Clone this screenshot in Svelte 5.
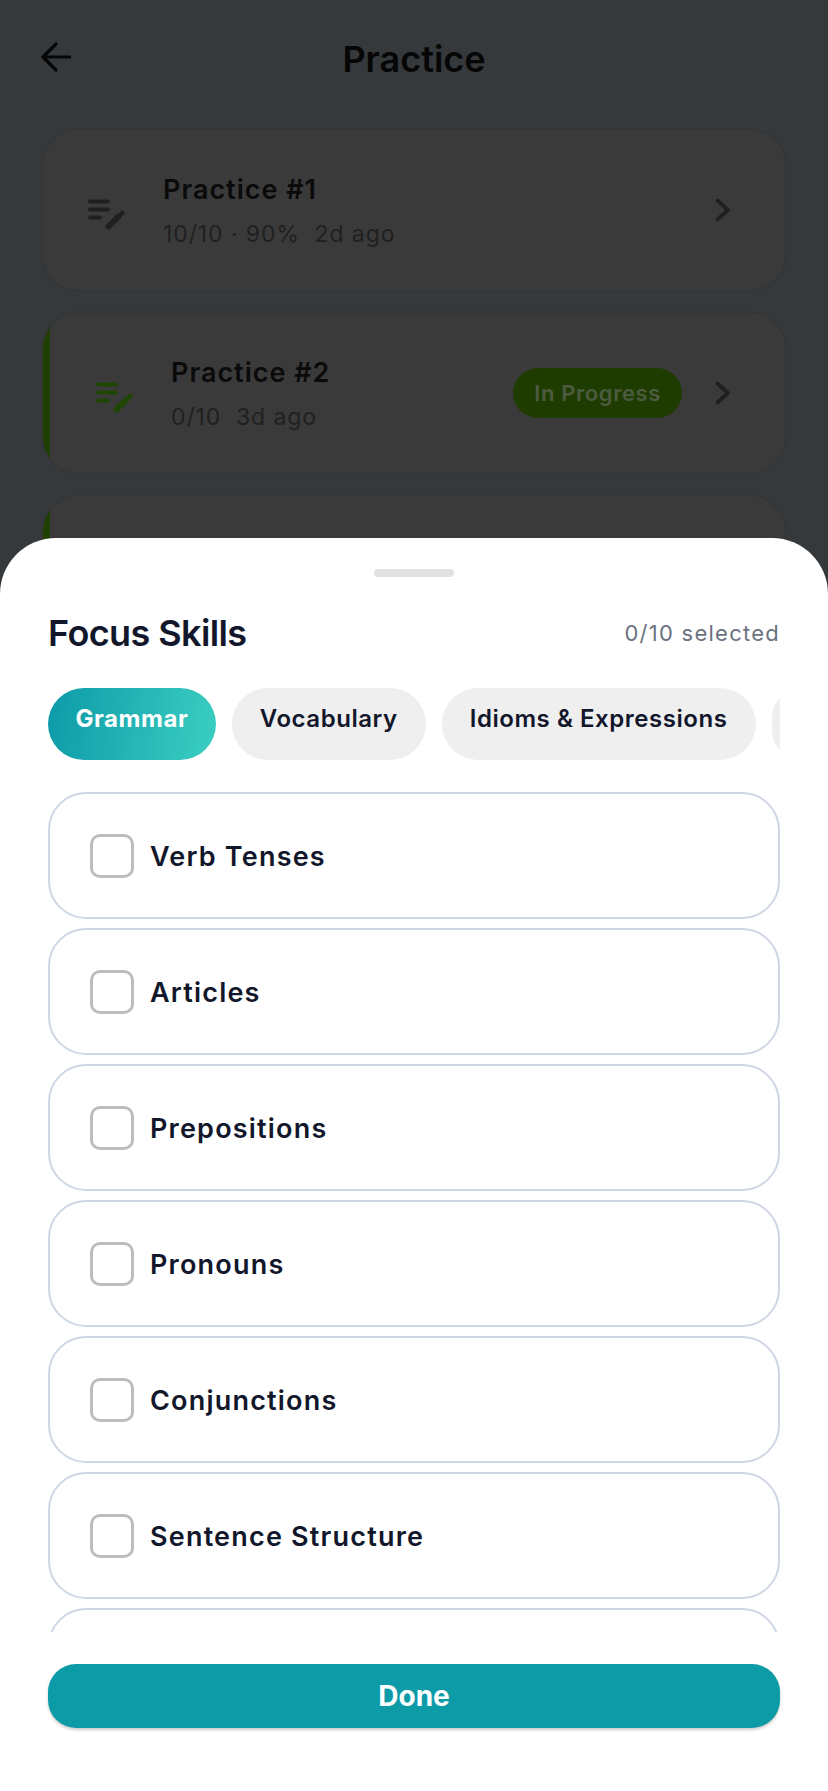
<script lang="ts">
  let practices = [
    { name: "Practice #1", meta: "10/10 · 90%  2d ago", active: false },
    { name: "Practice #2", meta: "0/10  3d ago", active: true },
    { name: "", meta: "", active: true }
  ];
  // the last tab and the last row are scrolled out of view, only their shapes show
  let tabs = ["Grammar", "Vocabulary", "Idioms & Expressions", ""];
  let skills = ["Verb Tenses", "Articles", "Prepositions", "Pronouns", "Conjunctions", "Sentence Structure", ""];
  let selected = 0;
</script>

<div class="screen">
  <header class="topbar">
    <button class="back" aria-label="Back">
      <svg width="30" height="30" viewBox="0 0 30 30" fill="none" stroke="#060606" stroke-width="3.2" stroke-linecap="round" stroke-linejoin="round">
        <path d="M29 15H2M15 2 2 15l13 13" />
      </svg>
    </button>
    <h1>Practice</h1>
  </header>

  <div class="cards">
    {#each practices as p}
      <div class="card" class:active={p.active}>
        {#if p.name}
          <svg class="note" width="40" height="32" viewBox="0 0 40 32" fill="none" stroke="currentColor" stroke-linecap="round">
            <path d="M4 2.5h18M4 10.5h18M4 18.5h10" stroke-width="3.8" />
            <path d="M22.5 27.5l10-10" stroke-width="6" />
            <path d="M35.6 14.6l.6-.6" stroke-width="4.6" />
          </svg>
          <div class="info">
            <div class="name">{p.name}</div>
            <div class="meta">{p.meta}</div>
          </div>
          {#if p.active}
            <span class="status">In Progress</span>
          {/if}
          <svg class="chevron" width="16" height="24" viewBox="0 0 16 24" fill="none" stroke="#1f2022" stroke-width="3.8" stroke-linecap="round" stroke-linejoin="round">
            <path d="M2.5 2.5 13 12 2.5 21.5" />
          </svg>
        {/if}
      </div>
    {/each}
  </div>

  <section class="sheet">
    <div class="handle"></div>
    <div class="sheet-head">
      <h2>Focus Skills</h2>
      <span class="count">{selected}/10 selected</span>
    </div>

    <div class="tabs">
      {#each tabs as t, i}
        <button class="tab" class:on={i === 0}>{t}</button>
      {/each}
    </div>

    <div class="list">
      {#each skills as s}
        <div class="row">
          <span class="box"></span>
          <span class="label">{s}</span>
        </div>
      {/each}
    </div>

    <button class="done">Done</button>
  </section>
</div>

<style>
  :global(body) {
    margin: 0;
  }

  .screen {
    position: relative;
    width: 828px;
    height: 1791px;
    overflow: hidden;
    background: #35393b;
    font-family: Inter, "Liberation Sans", sans-serif;
  }

  .topbar {
    display: grid;
    grid-template-columns: 1fr auto 1fr;
    align-items: center;
    height: 30px;
    padding: 37px 41px 0;
  }
  .back {
    justify-self: start;
    display: flex;
    margin-top: -4px;
    padding: 0;
    border: 0;
    background: none;
  }
  h1 {
    margin: 0;
    font-size: 36px;
    font-weight: 600;
    color: #060606;
  }

  .cards {
    display: flex;
    flex-direction: column;
    gap: 19px;
    padding: 61px 41px 0;
  }
  .card {
    position: relative;
    display: flex;
    align-items: center;
    box-sizing: border-box;
    height: 164px;
    padding: 0 54px 0 43px;
    border: 2px solid #353637;
    border-radius: 38px;
    background: #3a3a3a;
    color: #1f1f1f;
    overflow: hidden;
  }
  .card.active {
    padding-left: 51px;
    color: #1e4600;
  }
  .card.active::before {
    content: "";
    position: absolute;
    left: -2px;
    top: -2px;
    bottom: -2px;
    width: 9px;
    background: #1f3f00;
  }
  .note {
    flex: none;
    margin-right: 37px;
    margin-top: 9px;
  }
  .info {
    flex: 1;
    display: flex;
    flex-direction: column;
    gap: 13px;
    margin-top: 2px;
  }
  .name {
    font-size: 27px;
    line-height: 32px;
    font-weight: 600;
    letter-spacing: 1px;
    color: #0a0a0a;
  }
  .meta {
    font-size: 23px;
    line-height: 30px;
    letter-spacing: 0.9px;
    white-space: pre;
    color: #1f2021;
  }
  .status {
    margin-right: 33px;
    padding: 0 21px;
    height: 50px;
    line-height: 50px;
    border-radius: 25px;
    background: #1f3c00;
    color: #4b5b3f;
    font-size: 22px;
    font-weight: 600;
    letter-spacing: 0.6px;
  }
  .chevron {
    flex: none;
  }

  .sheet {
    position: absolute;
    left: 0;
    right: 0;
    top: 538px;
    bottom: 0;
    display: flex;
    flex-direction: column;
    padding: 31px 48px 0;
    border-radius: 56px 56px 0 0;
    background: #fff;
  }
  .handle {
    align-self: center;
    width: 80px;
    height: 8px;
    border-radius: 4px;
    background: #e2e2e2;
  }
  .sheet-head {
    display: flex;
    justify-content: space-between;
    align-items: center;
    margin-top: 33px;
    height: 46px;
  }
  h2 {
    margin: 0;
    font-size: 36px;
    font-weight: 600;
    letter-spacing: -0.6px;
    color: #12172b;
  }
  .count {
    font-size: 22px;
    letter-spacing: 1.25px;
    color: #6b7280;
  }

  .tabs {
    display: flex;
    gap: 16px;
    margin-top: 32px;
    overflow: hidden;
  }
  .tab {
    flex: none;
    box-sizing: border-box;
    height: 72px;
    min-width: 60px;
    padding: 0 28px 12px;
    border: 0;
    border-radius: 36px;
    background: #efeff0;
    color: #12172b;
    font: 600 24px Inter, "Liberation Sans", sans-serif;
    letter-spacing: 0.55px;
  }
  .tab.on {
    padding: 0 27.5px 12px;
    background: linear-gradient(100deg, #0d9aa8, #3bcfc2);
    color: #fff;
    font-weight: 700;
  }

  .list {
    display: flex;
    flex-direction: column;
    gap: 9px;
    height: 840px;
    margin-top: 32px;
    overflow: hidden;
  }
  .row {
    flex: none;
    display: flex;
    align-items: center;
    gap: 16px;
    box-sizing: border-box;
    height: 127px;
    padding: 0 40px;
    border: 2px solid #cfd7e4;
    border-radius: 38px;
  }
  .box {
    box-sizing: border-box;
    width: 44px;
    height: 44px;
    border: 3px solid #bdbdbd;
    border-radius: 10px;
  }
  .label {
    margin-top: 2px;
    font-size: 27px;
    font-weight: 600;
    letter-spacing: 1.2px;
    color: #12172b;
  }

  .done {
    flex: none;
    height: 64px;
    margin-top: 32px;
    border: 0;
    border-radius: 28px;
    background: #0d9ba8;
    box-shadow: 0 2px 3px rgba(0, 0, 0, 0.2);
    color: #fff;
    font: 700 28px Inter, "Liberation Sans", sans-serif;
  }
</style>
